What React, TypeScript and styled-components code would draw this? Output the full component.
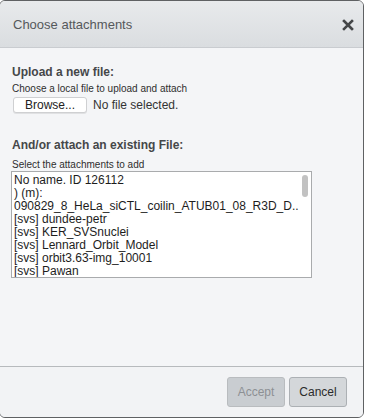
import React from "react";
import styled, { createGlobalStyle } from "styled-components";

const GlobalStyle = createGlobalStyle`
  html, body {
    margin: 0;
    padding: 0;
    background: #ffffff;
    overflow: hidden;
  }
  body {
    font-family: "Liberation Sans", Arial, Helvetica, sans-serif;
  }
`;

const Dialog = styled.div`
  margin-left: -1px;
  width: 365px;
  height: 418px;
  box-sizing: border-box;
  border: 1px solid #5f6163;
  border-radius: 6px;
  overflow: hidden;
  display: flex;
  flex-direction: column;
  background: #f4f5f7;
`;

const Header = styled.div`
  height: 46px;
  flex-shrink: 0;
  display: flex;
  align-items: center;
  justify-content: space-between;
  padding: 0 9px 0 13px;
  background: linear-gradient(#e8eaec, #dadde0);
  border-bottom: 1px solid #c9ccd0;

  .title {
    font-size: 13px;
    color: #55585b;
  }
`;

const CloseButton = styled.button`
  border: 0;
  padding: 0;
  background: none;
  width: 12px;
  height: 12px;
  display: flex;
  align-items: center;
  justify-content: center;
  margin-top: 1px;
  cursor: pointer;
`;

const Body = styled.div`
  flex: 1;
  padding: 17px 12px 0 12px;
  display: flex;
  flex-direction: column;
`;

const SectionTitle = styled.div<{ $gap: number }>`
  font-size: 12px;
  font-weight: 700;
  line-height: 14px;
  color: #454749;
  margin-bottom: ${(p) => p.$gap}px;
`;

const Hint = styled.div<{ $lh: number }>`
  font-size: 10px;
  line-height: ${(p) => p.$lh}px;
  color: #2e2e2e;
`;

const FileRow = styled.div`
  display: flex;
  align-items: center;
  margin-top: 2px;
  margin-left: 1px;
  margin-bottom: 25px;

  .status {
    font-size: 12px;
    color: #333;
    margin-left: 6px;
  }
`;

const BrowseButton = styled.button`
  width: 74px;
  height: 16px;
  padding: 0;
  box-sizing: border-box;
  border: 1px solid #cfd0d2;
  border-radius: 3px;
  background: #ffffff;
  box-shadow: 0 1px 0 rgba(0, 0, 0, 0.08);
  font-family: inherit;
  font-size: 12px;
  color: #222;
  line-height: 14px;
`;

const ListBox = styled.div`
  position: relative;
  margin-top: 1px;
  margin-left: -1px;
  width: 301px;
  height: 107px;
  box-sizing: border-box;
  border: 1px solid #a9abad;
  background: #ffffff;
  padding: 2px 14px 0 2px;
  overflow: hidden;
`;

const Option = styled.div`
  font-size: 12px;
  line-height: 13px;
  color: #1d1d1d;
  white-space: nowrap;
`;

const ScrollThumb = styled.div`
  position: absolute;
  top: 3px;
  right: 3px;
  width: 6px;
  height: 22px;
  border-radius: 3px;
  background: #c2c2c2;
`;

const Footer = styled.div`
  height: 50px;
  flex-shrink: 0;
  border-top: 1px solid #b7babd;
  background: #f2f3f5;
  display: flex;
  align-items: center;
  justify-content: flex-end;
  gap: 4px;
  padding-right: 16px;
`;

const FooterButton = styled.button<{ $disabled?: boolean }>`
  height: 30px;
  width: 58px;
  padding: 0;
  box-sizing: border-box;
  border-radius: 3px;
  border: 1px solid ${(p) => (p.$disabled ? "#b9bcbf" : "#acb0b4")};
  background: ${(p) => (p.$disabled ? "#c9cdd1" : "#d4d7da")};
  color: ${(p) => (p.$disabled ? "#8d9094" : "#2b2b2b")};
  font-family: inherit;
  font-size: 12px;
`;

const attachments = [
  "No name. ID 126112",
  ") (m):",
  "090829_8_HeLa_siCTL_coilin_ATUB01_08_R3D_D..",
  "[svs] dundee-petr",
  "[svs] KER_SVSnuclei",
  "[svs] Lennard_Orbit_Model",
  "[svs] orbit3.63-img_10001",
  "[svs] Pawan",
];

function CloseIcon() {
  return (
    <svg width="12" height="12" viewBox="0 0 12 12">
      <path d="M2 2 L10 10 M10 2 L2 10" stroke="#444648" strokeWidth="2.6" strokeLinecap="square" />
    </svg>
  );
}

export default function App() {
  return (
    <>
      <GlobalStyle />
      <Dialog>
        <Header>
          <span className="title">Choose attachments</span>
          <CloseButton aria-label="close">
            <CloseIcon />
          </CloseButton>
        </Header>
        <Body>
          <SectionTitle $gap={4}>Upload a new file:</SectionTitle>
          <Hint $lh={12}>Choose a local file to upload and attach</Hint>
          <FileRow>
            <BrowseButton>Browse...</BrowseButton>
            <span className="status">No file selected.</span>
          </FileRow>
          <SectionTitle $gap={7}>And/or attach an existing File:</SectionTitle>
          <Hint $lh={11}>Select the attachments to add</Hint>
          <ListBox>
            {attachments.map((name) => (
              <Option key={name}>{name}</Option>
            ))}
            <ScrollThumb />
          </ListBox>
        </Body>
        <Footer>
          <FooterButton $disabled>Accept</FooterButton>
          <FooterButton>Cancel</FooterButton>
        </Footer>
      </Dialog>
    </>
  );
}
